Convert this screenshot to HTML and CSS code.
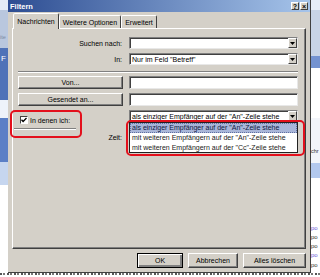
FILE: index.html
```html
<!DOCTYPE html>
<html lang="de">
<head>
  <meta charset="UTF-8">
  <title>Filtern</title>
  <link rel="stylesheet" href="styles.css">
</head>
<body>

  <div class="screen">
    <!-- Desktop behind the dialog -->
    <div class="desk-left">
      <span class="dl-ite">ite</span>
      <span class="dl-f">F</span>
    </div>

    <div class="dialog">
      <div class="titlebar">
        <span class="title">Filtern</span>
        <span class="tbtn">?</span>
        <span class="tbtn">×</span>
      </div>

      <div class="content">
        <div class="tabs">
          <span class="tab active tab-msg">Nachrichten</span>
          <span class="tab tab-more">Weitere Optionen</span>
          <span class="tab tab-adv">Erweitert</span>
        </div>

        <div class="panel">
          <div class="row row-combo">
            <label class="lbl">Suchen nach:</label>
            <div class="combo">
              <span class="combo-text"></span>
              <span class="arrow"><svg width="5" height="3" viewBox="0 0 5 3"><path d="M0 0h5L2.5 3z"/></svg></span>
            </div>
          </div>

          <div class="row row-combo gap">
            <label class="lbl">In:</label>
            <div class="combo">
              <span class="combo-text">Nur im Feld "Betreff"</span>
              <span class="arrow"><svg width="5" height="3" viewBox="0 0 5 3"><path d="M0 0h5L2.5 3z"/></svg></span>
            </div>
          </div>

          <div class="separator"></div>

          <div class="row row-btn">
            <button class="btn wide">Von...</button>
            <div class="field"></div>
          </div>

          <div class="row row-btn gap">
            <button class="btn wide">Gesendet an...</button>
            <div class="field"></div>
          </div>

          <div class="row row-check gap">
            <div class="check-cell">
              <div class="check-line">
                <span class="checkbox"><svg width="6" height="6" viewBox="0 0 6 6"><path d="M0.5 2.8l1.6 1.7L5.5 1" fill="none" stroke="#000" stroke-width="1.3"/></svg></span>
                <span>In denen ich:</span>
              </div>
              <div class="mini-sep"></div>
            </div>
            <div class="combo select">
              <span class="combo-text">als einziger Empfänger auf der "An"-Zeile stehe</span>
              <span class="arrow"><svg width="5" height="3" viewBox="0 0 5 3"><path d="M0 0h5L2.5 3z"/></svg></span>

              <!-- open dropdown list -->
              <ul class="popup">
                <li class="selected">als einziger Empfänger auf der "An"-Zeile stehe</li>
                <li>mit weiteren Empfängern auf der "An"-Zeile stehe</li>
                <li>mit weiteren Empfängern auf der "Cc"-Zeile stehe</li>
              </ul>
            </div>
          </div>

          <div class="row row-time">
            <label class="lbl">Zeit:</label>
            <div class="combo"></div>
          </div>
        </div>

        <div class="actions">
          <button class="btn default w-ok">OK</button>
          <button class="btn w-cancel">Abbrechen</button>
          <button class="btn w-clear">Alles löschen</button>
        </div>
      </div>
    </div>

    <div class="desk-right">
      <span class="dr dr-chr">chr</span>
      <span class="dr dr-blue" style="top:225px">po</span>
      <span class="dr" style="top:234px">po</span>
      <span class="dr" style="top:243px">po</span>
      <span class="dr dr-blue" style="top:252px">po</span>
      <span class="dr" style="top:262px">po</span>
    </div>
  </div>
  <div class="desk-bottom"></div>

  <!-- red annotation marks -->
  <div class="mark mark-check"></div>
  <div class="mark mark-list"></div>

</body>
</html>
```

FILE: styles.css
```css
* {
  box-sizing: border-box;
}

body {
  margin: 0;
  width: 320px;
  height: 277px;
  overflow: hidden;
  position: relative;
  font-family: "Liberation Sans", Arial, sans-serif;
  font-size: 7px;
  color: #000;
  background: #fff;
}

.screen {
  display: flex;
  height: 273px;
}

/* desktop strips */
.desk-left {
  width: 8px;
  position: relative;
  overflow: hidden;
  background: linear-gradient(to bottom,
    #e4ecf6 0 10px, #b9c7de 10px 48px, #4f72b8 48px 100px,
    #eef3fa 100px 118px, #5b7fc6 118px 162px, #c6d6ef 162px 185px,
    #fff 185px 273px);
}

.dl-ite {
  position: absolute;
  top: 34px;
  left: 0;
  font-size: 5.5px;
  color: #7c8aa2;
}

.dl-f {
  position: absolute;
  top: 54px;
  left: 1px;
  color: #fff;
  font-size: 8px;
}

.desk-right {
  flex: 1;
  position: relative;
  overflow: hidden;
  background: linear-gradient(to bottom,
    #e6eef8 0 10px, #c8d4e6 10px 56px, #7493d0 56px 68px,
    #fff 68px 118px, #f2f5fa 118px 163px, #b3c9ee 163px 178px,
    #fff 178px 273px);
}

.dr {
  position: absolute;
  left: 0;
  font-size: 6px;
  color: #333;
}

.dr-chr {
  top: 148px;
  font-size: 5.5px;
}

.dr-blue {
  color: #6a5ad8;
}

.desk-bottom {
  height: 4px;
  background:
    linear-gradient(to bottom, transparent 0 2px, #fff 2px),
    repeating-linear-gradient(to right, #555 0 2px, #fff 2px 3px, #777 3px 5px, #fff 5px 7px);
}

/* dialog window */
.dialog {
  width: 303px;
  background: #d4d0c8;
  border-right: 1px solid #404040;
  border-bottom: 1px solid #404040;
  display: flex;
  flex-direction: column;
}

.titlebar {
  height: 12px;
  display: flex;
  align-items: center;
  padding: 0 2px;
  background: linear-gradient(to right, #2d4d92, #a6c4ea);
  color: #fff;
  font-weight: bold;
  font-size: 7.5px;
}

.title {
  flex: 1;
}

.tbtn {
  width: 8px;
  height: 8px;
  margin-left: 1px;
  display: flex;
  align-items: center;
  justify-content: center;
  background: #d4d0c8;
  border: 1px solid;
  border-color: #fff #404040 #404040 #fff;
  color: #000;
  font-size: 7px;
  font-weight: bold;
  line-height: 1;
}

.content {
  flex: 1;
  padding: 1px 4px 0;
}

/* tabs */
.tabs {
  display: flex;
  align-items: flex-end;
  height: 15px;
  padding-left: 1px;
}

.tab {
  height: 13px;
  display: flex;
  align-items: center;
  justify-content: center;
  border: 1px solid;
  border-bottom: none;
  border-color: #fff #404040 transparent #fff;
  border-radius: 2px 2px 0 0;
}

.tab.active {
  height: 16px;
  margin-bottom: -1px;
  position: relative;
  z-index: 1;
  background: #d4d0c8;
}

.tab-msg { width: 46px; }
.tab-more { width: 62px; }
.tab-adv { width: 36px; }

/* tab panel */
.panel {
  height: 221px;
  padding: 8px 7px 0 5px;
  border: 1px solid;
  border-color: #fff #404040 #404040 #fff;
  box-shadow: inset -1px -1px #808080;
}

.row {
  display: grid;
  grid-template-columns: 106px 1fr;
  column-gap: 5px;
  align-items: center;
}

.row.gap {
  margin-top: 4px;
}

.row-combo { height: 12px; }
.row-btn { height: 13px; }

.row-check {
  align-items: start;
}

.row-time {
  height: 11px;
  margin-top: 2px;
}

.lbl {
  text-align: right;
  padding-right: 2px;
}

.combo, .field {
  height: 12px;
  display: flex;
  align-items: center;
  background: #fff;
  border: 1px solid;
  border-color: #808080 #e8e8e8 #e8e8e8 #808080;
  box-shadow: inset 1px 1px #404040;
}

.field {
  height: 13px;
}

.row-time .combo {
  height: 11px;
}

.combo-text {
  flex: 1;
  padding-left: 2px;
  white-space: nowrap;
  overflow: hidden;
}

.arrow {
  width: 9px;
  height: 10px;
  display: flex;
  align-items: center;
  justify-content: center;
  background: #d4d0c8;
  border: 1px solid;
  border-color: #fff #404040 #404040 #fff;
}

.select {
  position: relative;
}

.popup {
  position: absolute;
  top: 11px;
  left: -1px;
  right: -1px;
  height: 31px;
  margin: 0;
  padding: 0;
  list-style: none;
  background: #fff;
  border: 1px solid #222;
  z-index: 2;
}

.popup li {
  height: 10px;
  line-height: 9px;
  padding-left: 2px;
  white-space: nowrap;
  color: #222;
}

.popup li.selected {
  background: #a9b6d9;
  color: #101840;
  outline: 1px dotted #6070a0;
  outline-offset: -1px;
}

.separator {
  height: 2px;
  margin: 6px 0 3px;
  border-top: 1px solid #808080;
  border-bottom: 1px solid #fff;
}

/* checkbox */
.check-cell {
  padding-top: 6px;
}

.check-line {
  display: flex;
  align-items: center;
  height: 8px;
  padding-left: 2px;
  gap: 2px;
}

.checkbox {
  width: 8px;
  height: 8px;
  display: flex;
  align-items: center;
  justify-content: center;
  background: #fff;
  border: 1px solid;
  border-color: #404040 #fff #fff #404040;
}

.mini-sep {
  width: 62px;
  height: 2px;
  margin: 4px 0 0 -4px;
  border-top: 1px solid #808080;
  border-bottom: 1px solid #fff;
}

/* buttons */
.btn {
  height: 13px;
  padding: 0;
  font-family: inherit;
  font-size: 7px;
  color: #000;
  background: #d4d0c8;
  border: 1px solid;
  border-color: #fff #404040 #404040 #fff;
  box-shadow: inset -1px -1px #808080;
}

.btn.wide {
  width: 105px;
}

.actions {
  display: flex;
  justify-content: flex-end;
  gap: 5px;
  margin-top: 4px;
}

.actions .btn {
  height: 15px;
}

.btn.default {
  border-color: #000;
  box-shadow: inset 1px 1px #fff, inset -2px -2px #808080;
}

.w-ok { width: 46px; }
.w-cancel { width: 50px; }
.w-clear { width: 63px; }

/* red annotation marks over the screenshot */
.mark {
  position: absolute;
  border: 2px solid #e3101c;
  border-radius: 5px;
}

.mark-check {
  left: 10px;
  top: 110px;
  width: 72px;
  height: 28px;
}

.mark-list {
  left: 126px;
  top: 120px;
  width: 179px;
  height: 36px;
}
```
